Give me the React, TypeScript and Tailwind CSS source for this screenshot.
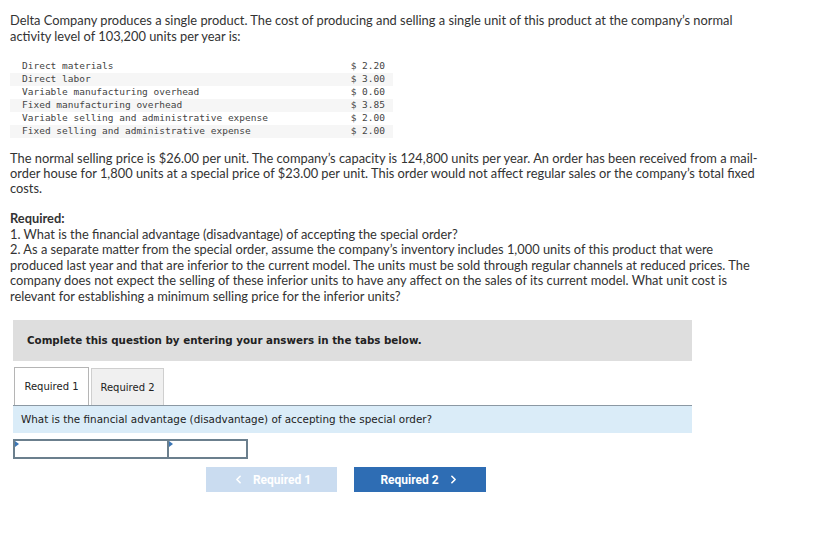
import { ChevronLeft, ChevronRight } from 'lucide-react';

const costs = [
  { label: 'Direct materials', value: '$ 2.20' },
  { label: 'Direct labor', value: '$ 3.00' },
  { label: 'Variable manufacturing overhead', value: '$ 0.60' },
  { label: 'Fixed manufacturing overhead', value: '$ 3.85' },
  { label: 'Variable selling and administrative expense', value: '$ 2.00' },
  { label: 'Fixed selling and administrative expense', value: '$ 2.00' },
];

const body = "font-['Lato',sans-serif] text-[12.85px] text-[#333]";
const verdana = "font-['DejaVu_Sans',Verdana,sans-serif]";

export default function App() {
  return (
    <div className="w-[819px] h-[536px] bg-white overflow-hidden">
      <div className="pl-[10px] pt-[12px] w-[763px]">
        <p className={`${body} leading-[16px]`}>
          Delta Company produces a single product. The cost of producing and selling a single unit of this product at the company’s normal activity level of 103,200 units per year is:
        </p>

        <div className="mt-[16px] w-[383px] font-['DejaVu_Sans_Mono',monospace] text-[9.5px] text-[#444]">
          {costs.map((c, i) => (
            <div
              key={i}
              className={`flex h-[13px] items-center justify-between pl-[12px] pr-[8px] ${i % 2 === 1 ? 'bg-[#f6f6f6]' : 'bg-white'}`}
            >
              <span>{c.label}</span>
              <span>{c.value}</span>
            </div>
          ))}
        </div>

        <p className={`${body} leading-[15px] mt-[13px]`}>
          The normal selling price is $26.00 per unit. The company’s capacity is 124,800 units per year. An order has been received from a mail-order house for 1,800 units at a special price of $23.00 per unit. This order would not affect regular sales or the company’s total fixed costs.
        </p>

        <div className={`${body} leading-[15.5px] mt-[15px]`}>
          <p className="font-bold">Required:</p>
          <p>1. What is the financial advantage (disadvantage) of accepting the special order?</p>
          <p>
            2. As a separate matter from the special order, assume the company’s inventory includes 1,000 units of this product that were produced last year and that are inferior to the current model. The units must be sold through regular channels at reduced prices. The company does not expect the selling of these inferior units to have any affect on the sales of its current model. What unit cost is relevant for establishing a minimum selling price for the inferior units?
          </p>
        </div>
      </div>

      <div className="ml-[13px] mt-[16px] w-[679px]">
        <div className={`h-[41px] bg-[#dedede] flex items-center pl-[14px] ${verdana} text-[10.3px] font-bold text-[#222]`}>
          Complete this question by entering your answers in the tabs below.
        </div>

        <div className={`mt-[6px] flex items-end gap-[2px] pl-[1px] ${verdana} text-[10px] text-[#222]`}>
          <div className="h-[38px] w-[75px] flex items-center justify-center bg-white border border-b-0 border-[#b5b5b5]">
            Required 1
          </div>
          <div className="h-[37px] w-[73px] flex items-center justify-center bg-[#f0f0f0] border border-b-0 border-[#cfcfcf]">
            Required 2
          </div>
        </div>

        <div className={`h-[28px] bg-[#daecf8] border-t border-[#8b98a3] flex items-center pl-[8px] ${verdana} text-[10.4px] text-[#222]`}>
          What is the financial advantage (disadvantage) of accepting the special order?
        </div>

        <div className="mt-[6px] flex">
          <div className="relative h-[20px] w-[156px] border-2 border-[#6b7f8d] bg-white">
            <span className="absolute left-0 top-0 w-0 h-0 border-t-[3px] border-b-[3px] border-l-[4px] border-t-transparent border-b-transparent border-l-[#3b76b5]" />
          </div>
          <div className="relative h-[20px] w-[81px] -ml-[2px] border-2 border-[#6b7f8d] bg-white">
            <span className="absolute left-0 top-0 w-0 h-0 border-t-[3px] border-b-[3px] border-l-[4px] border-t-transparent border-b-transparent border-l-[#3b76b5]" />
          </div>
        </div>

        <div className="mt-[8px] ml-[193px] flex gap-[17px] font-['Roboto',sans-serif] text-[12px] font-bold text-white">
          <div className="h-[25px] w-[131px] bg-[#cadcf0] flex items-center justify-center gap-[8px]">
            <ChevronLeft size={13} strokeWidth={3} />
            <span>Required 1</span>
          </div>
          <div className="h-[25px] w-[132px] bg-[#2e6db4] flex items-center justify-center gap-[8px]">
            <span>Required 2</span>
            <ChevronRight size={13} strokeWidth={3} />
          </div>
        </div>
      </div>
    </div>
  );
}
